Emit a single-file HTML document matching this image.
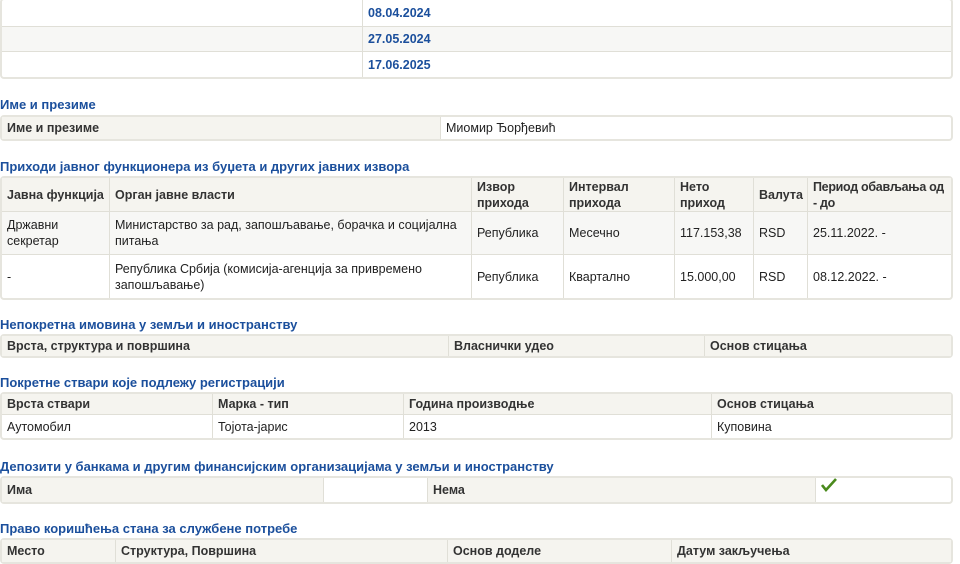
<!DOCTYPE html>
<html><head><meta charset="utf-8"><style>
body{margin:0;width:960px;height:560px;overflow:hidden;background:#fff;font-family:"Liberation Sans",Arial,sans-serif;font-size:12.5px;color:#222;position:relative}
.t{position:absolute;left:0;width:953px;border-collapse:separate;border-spacing:0;border:2px solid #e6e5de;border-radius:4px;table-layout:fixed;}
.t td{border-right:1px solid #e0dfd7;border-bottom:1px solid #e0dfd7;padding:0 5px;vertical-align:middle;line-height:16px}
.t tr td:last-child{border-right:none}
.t tr:last-child td{border-bottom:none}
.h td{background:#f5f4ef;font-weight:bold;color:#333}
.g td{background:#f7f7f5}
.ttl{position:absolute;left:0;color:#1b4f9c;font-weight:bold;font-size:13px}
.d{color:#1b4f9c;font-weight:bold}
</style></head><body>
<table class="t" style="top:-2px"><colgroup><col style="width:361px"><col></colgroup>
<tr style="height:27px"><td></td><td class="d">08.04.2024</td></tr>
<tr class="g" style="height:25px"><td></td><td class="d">27.05.2024</td></tr>
<tr style="height:25px"><td></td><td class="d">17.06.2025</td></tr></table>

<div class="ttl" style="top:97px">Име и презиме</div>
<table class="t" style="top:115px"><colgroup><col style="width:439px"><col></colgroup>
<tr style="height:22px"><td style="background:#f5f4ef;font-weight:bold;color:#333">Име и презиме</td><td>Миомир Ђорђевић</td></tr></table>

<div class="ttl" style="top:159px">Приходи јавног функционера из буџета и других јавних извора</div>
<table class="t" style="top:176px"><colgroup><col style="width:108px"><col style="width:362px"><col style="width:92px"><col style="width:111px"><col style="width:79px"><col style="width:54px"><col></colgroup>
<tr class="h" style="height:34px"><td>Јавна функција</td><td>Орган јавне власти</td><td>Извор прихода</td><td>Интервал прихода</td><td>Нето приход</td><td>Валута</td><td style="padding:0 1px 0 5px;letter-spacing:-0.3px">Период обављања од - до</td></tr>
<tr class="g" style="height:43px"><td>Државни секретар</td><td>Министарство за рад, запошљавање, борачка и социјална питања</td><td>Република</td><td>Месечно</td><td>117.153,38</td><td>RSD</td><td>25.11.2022. -</td></tr>
<tr style="height:43px"><td>-</td><td>Република Србија (комисија-агенција за привремено запошљавање)</td><td>Република</td><td>Квартално</td><td>15.000,00</td><td>RSD</td><td>08.12.2022. -</td></tr></table>

<div class="ttl" style="top:317px">Непокретна имовина у земљи и иностранству</div>
<table class="t" style="top:334px"><colgroup><col style="width:447px"><col style="width:256px"><col></colgroup>
<tr class="h" style="height:20px"><td>Врста, структура и површина</td><td>Власнички удео</td><td>Основ стицања</td></tr></table>

<div class="ttl" style="top:375px">Покретне ствари које подлежу регистрацији</div>
<table class="t" style="top:392px"><colgroup><col style="width:211px"><col style="width:191px"><col style="width:308px"><col></colgroup>
<tr class="h" style="height:21px"><td>Врста ствари</td><td>Марка - тип</td><td>Година производње</td><td>Основ стицања</td></tr>
<tr style="height:23px"><td>Аутомобил</td><td>Тојота-јарис</td><td>2013</td><td>Куповина</td></tr></table>

<div class="ttl" style="top:459px">Депозити у банкама и другим финансијским организацијама у земљи и иностранству</div>
<table class="t" style="top:476px"><colgroup><col style="width:322px"><col style="width:104px"><col style="width:388px"><col></colgroup>
<tr style="height:24px"><td style="background:#f5f4ef;font-weight:bold;color:#333">Има</td><td></td><td style="background:#f5f4ef;font-weight:bold;color:#333">Нема</td><td style="vertical-align:top;padding-top:0"><svg width="16" height="14" viewBox="0 0 16 14"><path d="M1 7 L5 12 L15 1" fill="none" stroke="#4a8a1c" stroke-width="2.6"/></svg></td></tr></table>

<div class="ttl" style="top:521px">Право коришћења стана за службене потребе</div>
<table class="t" style="top:538px"><colgroup><col style="width:114px"><col style="width:332px"><col style="width:224px"><col></colgroup>
<tr class="h" style="height:22px"><td>Место</td><td>Структура, Површина</td><td>Основ доделе</td><td>Датум закључења</td></tr></table>
</body></html>
